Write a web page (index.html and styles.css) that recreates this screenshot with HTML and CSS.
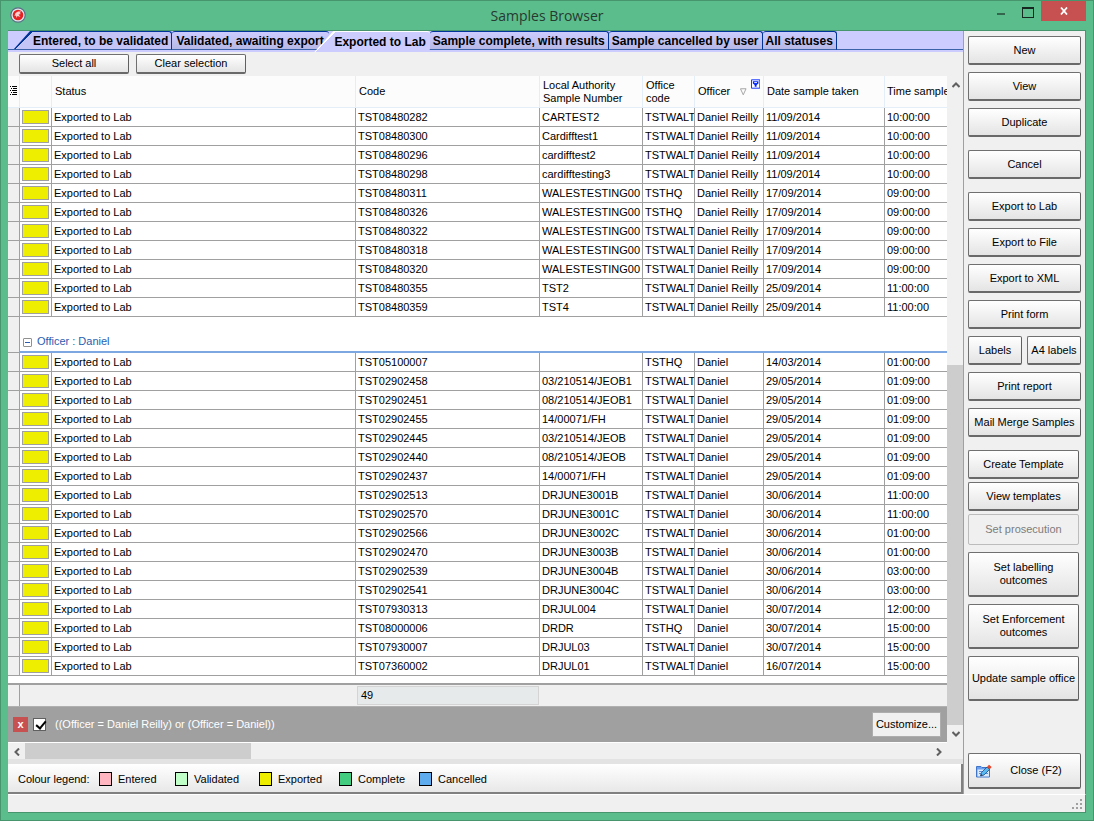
FILE: index.html
```
<!DOCTYPE html>
<html lang="en">
<head>
    <meta charset="UTF-8">
    <meta name="viewport" content="width=device-width, initial-scale=1.0">
    <title>Samples Browser</title>
    <link rel="stylesheet" href="styles.css">
</head>
<body>
    <div class="window">
        <header class="titlebar">
            <svg class="app-icon" width="16" height="16" viewBox="0 0 16 16">
                <circle cx="8" cy="8" r="7.2" fill="#dfe8ee" stroke="#5b6f86" stroke-width="1.2"/>
                <circle cx="8" cy="8" r="5.3" fill="#e42222"/>
                <path d="M4.5 9 L5.5 6 L8 4.5 L11.5 4.5 L9.5 6 L11 7 L8.5 7.5 L10.5 10 L7.5 9 L6.5 11 L6 8.5 Z" fill="#fff" opacity=".8"/>
            </svg>
            <h1>Samples Browser</h1>
            <div class="window-buttons">
                <button type="button" class="minimize" aria-label="Minimize"></button>
                <button type="button" class="maximize" aria-label="Maximize"></button>
                <button type="button" class="close" aria-label="Close">
                    <svg width="8" height="8" viewBox="0 0 8 8"><path d="M1 .5 L7 7.5 M7 .5 L1 7.5" stroke="#fff" stroke-width="1.8"/></svg>
                </button>
            </div>
        </header>

        <div class="content">
            <main class="browser">
                <nav class="tabs">
                    <button type="button" class="tab first">Entered, to be validated</button>
                    <button type="button" class="tab cut">Validated, awaiting export</button>
                    <button type="button" class="tab active">Exported to Lab</button>
                    <button type="button" class="tab">Sample complete, with results</button>
                    <button type="button" class="tab">Sample cancelled by user</button>
                    <button type="button" class="tab">All statuses</button>
                </nav>

                <div class="toolbar">
                    <button type="button" class="btn">Select all</button>
                    <button type="button" class="btn">Clear selection</button>
                </div>

                <div class="grid-area">
                    <div class="grid">
                        <table class="samples">
                            <colgroup>
                                <col class="col-indicator">
                                <col class="col-colour">
                                <col class="col-status">
                                <col class="col-code">
                                <col class="col-number">
                                <col class="col-office">
                                <col class="col-officer">
                                <col class="col-date">
                                <col>
                            </colgroup>
                            <thead>
                                <tr>
                                    <th class="menu-cell">
                                        <svg width="7" height="9" viewBox="0 0 7 9"><path d="M0 .5h1M2 .5h5M1 2.5h1M3 2.5h4M0 4.5h1M2 4.5h5M1 6.5h1M3 6.5h4M0 8.5h1M2 8.5h5" stroke="#000"/></svg>
                                    </th>
                                    <th></th>
                                    <th>Status</th>
                                    <th>Code</th>
                                    <th>Local Authority<br>Sample Number</th>
                                    <th>Office<br>code</th>
                                    <th>
                                        <div class="officer-head">
                                            <span>Officer</span>
                                            <svg class="sort" width="7" height="8" viewBox="0 0 7 8"><path d="M.5 .5 H6.5 L3.5 7 Z" fill="none" stroke="#a0a0a0"/></svg>
                                            <svg class="filter" width="10" height="10" viewBox="0 0 10 10"><path d="M.5 .5h9v9h-9z" fill="#fff" stroke="#0026ff"/><path d="M2 2h6v2.500l-2 1.500v2h-2v-2l-2-1.500z" fill="#0026ff"/><path d="M3.500 3.500h3" stroke="#fff"/></svg>
                                        </div>
                                    </th>
                                    <th>Date sample taken</th>
                                    <th class="time-head">Time sample</th>
                                </tr>
                            </thead>
                            <tbody id="reilly-rows"></tbody>
                            <tbody>
                                <tr class="group-row">
                                    <td class="indicator"></td>
                                    <td colspan="8">
                                        <button type="button" class="collapse" aria-label="Collapse group"></button>Officer : Daniel
                                    </td>
                                </tr>
                            </tbody>
                            <tbody id="daniel-rows"></tbody>
                        </table>

                        <div class="summary">
                            <span class="summary-gutter"></span>
                            <output class="count">49</output>
                        </div>

                        <div class="filter-bar">
                            <button type="button" class="clear-filter" aria-label="Clear filter">x</button>
                            <input type="checkbox" id="filter-on" checked>
                            <label for="filter-on">((Officer = Daniel Reilly) or (Officer = Daniel))</label>
                            <button type="button" class="customize">Customize...</button>
                        </div>
                    </div>

                    <div class="scroll-v">
                        <button type="button" class="arrow" aria-label="Scroll up"><svg width="8" height="6" viewBox="0 0 8 6"><path d="M.5 5 L4 1.5 L7.5 5" fill="none" stroke="#606060" stroke-width="2"/></svg></button>
                        <div class="track"><div class="thumb"></div></div>
                        <button type="button" class="arrow" aria-label="Scroll down"><svg width="8" height="6" viewBox="0 0 8 6"><path d="M.5 1 L4 4.5 L7.5 1" fill="none" stroke="#606060" stroke-width="2"/></svg></button>
                    </div>
                </div>

                <div class="scroll-h">
                    <button type="button" class="arrow" aria-label="Scroll left"><svg width="6" height="8" viewBox="0 0 6 8"><path d="M5 .5 L1.5 4 L5 7.5" fill="none" stroke="#606060" stroke-width="2"/></svg></button>
                    <div class="track"><div class="thumb"></div></div>
                    <button type="button" class="arrow" aria-label="Scroll right"><svg width="6" height="8" viewBox="0 0 6 8"><path d="M1 .5 L4.5 4 L1 7.5" fill="none" stroke="#606060" stroke-width="2"/></svg></button>
                </div>

                <div class="legend">
                    <span class="legend-title">Colour legend:</span>
                    <span class="key"><i class="swatch entered"></i>Entered</span>
                    <span class="key"><i class="swatch validated"></i>Validated</span>
                    <span class="key"><i class="swatch exported"></i>Exported</span>
                    <span class="key"><i class="swatch complete"></i>Complete</span>
                    <span class="key"><i class="swatch cancelled"></i>Cancelled</span>
                </div>
            </main>

            <aside class="actions">
                <div class="group">
                    <button type="button" class="btn">New</button>
                    <button type="button" class="btn">View</button>
                    <button type="button" class="btn">Duplicate</button>
                </div>
                <div class="group">
                    <button type="button" class="btn">Cancel</button>
                </div>
                <div class="group">
                    <button type="button" class="btn">Export to Lab</button>
                    <button type="button" class="btn">Export to File</button>
                    <button type="button" class="btn">Export to XML</button>
                    <button type="button" class="btn">Print form</button>
                    <div class="pair">
                        <button type="button" class="btn">Labels</button>
                        <button type="button" class="btn">A4 labels</button>
                    </div>
                    <button type="button" class="btn">Print report</button>
                    <button type="button" class="btn">Mail Merge Samples</button>
                </div>
                <div class="group tight">
                    <button type="button" class="btn">Create Template</button>
                    <button type="button" class="btn">View templates</button>
                    <button type="button" class="btn" disabled>Set prosecution</button>
                </div>
                <div class="group tall">
                    <button type="button" class="btn">Set labelling<br>outcomes</button>
                    <button type="button" class="btn">Set Enforcement<br>outcomes</button>
                    <button type="button" class="btn">Update sample office</button>
                </div>
                <button type="button" class="btn close-form">
                    <svg width="16" height="14" viewBox="0 0 16 14">
                        <path d="M.5 2.500h4.500l1 1h7.500v9.500h-13z" fill="#6aa0ee" stroke="#3f74c8"/>
                        <path d="M1.500 5.500h11.500v7h-11.500z" fill="#d8e9fb"/>
                        <path d="M3 7.500h4M3 9.500h2M9 9.500h3M9 7.500h3" stroke="#5b8fe0"/>
                        <path d="M4.500 12 L5.500 8.500 L11 3 L13.500 5.500 L8 11 Z" fill="#58b8f0" stroke="#234a80" stroke-width=".8"/>
                        <path d="M11 3 L13 .8 L15.700 3 L13.500 5.500 Z" fill="#e04a30"/>
                        <path d="M4.500 12 L5 10 L6.500 11.300 Z" fill="#303030"/>
                    </svg>
                    <span>Close (F2)</span>
                </button>
            </aside>
        </div>

        <footer class="statusbar">
            <svg width="10" height="10" viewBox="0 0 10 10"><path d="M8 0h2v2h-2zM4 4h2v2h-2zM8 4h2v2h-2zM0 8h2v2h-2zM4 8h2v2h-2zM8 8h2v2h-2z" fill="#a0a0a0"/></svg>
        </footer>
    </div>

    <script>
        // code, local authority number, office, date, time
        const reilly = [
            ['TST08480282', 'CARTEST2', 'TSTWALT', '11/09/2014', '10:00:00'],
            ['TST08480300', 'Cardifftest1', 'TSTWALT', '11/09/2014', '10:00:00'],
            ['TST08480296', 'cardifftest2', 'TSTWALT', '11/09/2014', '10:00:00'],
            ['TST08480298', 'cardifftesting3', 'TSTWALT', '11/09/2014', '10:00:00'],
            ['TST08480311', 'WALESTESTING00', 'TSTHQ', '17/09/2014', '09:00:00'],
            ['TST08480326', 'WALESTESTING00', 'TSTHQ', '17/09/2014', '09:00:00'],
            ['TST08480322', 'WALESTESTING00', 'TSTWALT', '17/09/2014', '09:00:00'],
            ['TST08480318', 'WALESTESTING00', 'TSTWALT', '17/09/2014', '09:00:00'],
            ['TST08480320', 'WALESTESTING00', 'TSTWALT', '17/09/2014', '09:00:00'],
            ['TST08480355', 'TST2', 'TSTWALT', '25/09/2014', '11:00:00'],
            ['TST08480359', 'TST4', 'TSTWALT', '25/09/2014', '11:00:00']
        ];

        const daniel = [
            ['TST05100007', '', 'TSTHQ', '14/03/2014', '01:00:00'],
            ['TST02902458', '03/210514/JEOB1', 'TSTWALT', '29/05/2014', '01:09:00'],
            ['TST02902451', '08/210514/JEOB1', 'TSTWALT', '29/05/2014', '01:09:00'],
            ['TST02902455', '14/00071/FH', 'TSTWALT', '29/05/2014', '01:09:00'],
            ['TST02902445', '03/210514/JEOB', 'TSTWALT', '29/05/2014', '01:09:00'],
            ['TST02902440', '08/210514/JEOB', 'TSTWALT', '29/05/2014', '01:09:00'],
            ['TST02902437', '14/00071/FH', 'TSTWALT', '29/05/2014', '01:09:00'],
            ['TST02902513', 'DRJUNE3001B', 'TSTWALT', '30/06/2014', '11:00:00'],
            ['TST02902570', 'DRJUNE3001C', 'TSTWALT', '30/06/2014', '11:00:00'],
            ['TST02902566', 'DRJUNE3002C', 'TSTWALT', '30/06/2014', '01:00:00'],
            ['TST02902470', 'DRJUNE3003B', 'TSTWALT', '30/06/2014', '01:00:00'],
            ['TST02902539', 'DRJUNE3004B', 'TSTWALT', '30/06/2014', '03:00:00'],
            ['TST02902541', 'DRJUNE3004C', 'TSTWALT', '30/06/2014', '03:00:00'],
            ['TST07930313', 'DRJUL004', 'TSTWALT', '30/07/2014', '12:00:00'],
            ['TST08000006', 'DRDR', 'TSTHQ', '30/07/2014', '15:00:00'],
            ['TST07930007', 'DRJUL03', 'TSTWALT', '30/07/2014', '15:00:00'],
            ['TST07360002', 'DRJUL01', 'TSTWALT', '16/07/2014', '15:00:00']
        ];

        function fillRows(id, rows, officer) {
            const body = document.getElementById(id);
            rows.forEach(function(row) {
                const tr = body.insertRow();
                tr.insertCell().className = 'indicator';
                const colour = tr.insertCell();
                colour.className = 'colour';
                colour.appendChild(document.createElement('div'));
                ['Exported to Lab', row[0], row[1], row[2], officer, row[3], row[4]].forEach(function(text) {
                    tr.insertCell().textContent = text;
                });
            });
        }

        fillRows('reilly-rows', reilly, 'Daniel Reilly');
        fillRows('daniel-rows', daniel, 'Daniel');
    </script>
</body>
</html>
```
FILE: styles.css
```
* {
    box-sizing: border-box;
}

body {
    margin: 0;
    font-family: "Liberation Sans", Arial, sans-serif;
    font-size: 11px;
    line-height: 13px;
    color: #000;
}

button {
    font: inherit;
    color: inherit;
    margin: 0;
    padding: 0;
    border: none;
    background: none;
}

.window {
    min-height: 100vh;
    display: flex;
    flex-direction: column;
    background: #5bbd8c;
    border: 1px solid #46956c;
    padding: 0 7px 7px;
}

/* title bar */
.titlebar {
    display: grid;
    grid-template-columns: 1fr auto 1fr;
    height: 29px;
}

.app-icon {
    margin: 6px 2px;
}

.titlebar h1 {
    margin: 0;
    font-family: "Open Sans", sans-serif;
    font-size: 14px;
    font-weight: normal;
    line-height: 29px;
    color: #263a30;
}

.window-buttons {
    display: flex;
    justify-content: flex-end;
    height: 20px;
}

.minimize,
.maximize {
    width: 27px;
    display: flex;
    justify-content: center;
}

.minimize::before {
    content: "";
    width: 8px;
    height: 2px;
    margin-top: 12px;
    background: #34664e;
}

.maximize::before {
    content: "";
    width: 10px;
    height: 8px;
    margin-top: 6px;
    border: 1px solid #16281f;
    border-top-width: 2px;
}

.close {
    width: 45px;
    background: #c75050;
}

/* main area */
.content {
    flex: 1;
    display: flex;
    background: #f0f0f0;
    border-top: 1px solid #46956c;
    border-right: 1px solid #46956c;
}

.browser {
    flex: 1;
    min-width: 0;
    display: flex;
    flex-direction: column;
}

.tabs {
    display: flex;
    height: 21px;
    padding-left: 5px;
    background: linear-gradient(#ccccff 18px, #3a62a8 18px, #3a62a8 19px, #ccccff 19px);
}

.tab {
    height: 19px;
    padding: 2px 3px 0;
    border: 1px solid #003399;
    border-left: none;
    border-radius: 3px 3px 0 0;
    border-bottom-color: #3a62a8;
    background: linear-gradient(#ccccff, #b8b8e6);
    font-size: 12px;
    font-weight: bold;
    white-space: nowrap;
    overflow: hidden;
}

/* slanted left edges */
.tab.first {
    padding-left: 20px;
    background: linear-gradient(135deg, #003399 14px, #c4c4f6 14px);
    clip-path: polygon(17px 0, 100% 0, 100% 100%, 0 100%);
}

.tab.cut {
    width: 157px;
    padding-left: 4px;
    border-right: none;
    text-align: left;
}

.tab.active {
    height: 21px;
    margin-left: -15px;
    padding: 2px 4px 2px 20px;
    border: none;
    border-top: 1px solid #fff;
    background: linear-gradient(135deg, #fff 15px, #ccccff 15px);
    clip-path: polygon(19px 0, 100% 0, 100% 100%, 0 100%);
}

.toolbar {
    display: flex;
    gap: 7px;
    padding: 2px 11px;
}

.toolbar .btn {
    width: 110px;
    height: 20px;
}

.btn {
    border: 1px solid #707070;
    border-right-color: #606060;
    border-bottom: 2px solid #696969;
    border-radius: 2px;
    background: linear-gradient(#fff, #e4e4e4);
    text-align: center;
}

.btn:disabled {
    border: 1px solid #bcbcbc;
    background: #f0f0f0;
    color: #7c7c7c;
}

/* grid */
.grid-area {
    flex: 1;
    display: flex;
}

.grid {
    flex: 1;
    min-width: 0;
    display: flex;
    flex-direction: column;
    background: #fff;
}

.samples {
    width: 100%;
    table-layout: fixed;
    border-collapse: separate;
    border-spacing: 0;
    margin-bottom: auto;
}

.col-indicator { width: 12px; }
.col-colour { width: 32px; }
.col-status { width: 304px; }
.col-code { width: 184px; }
.col-number { width: 103px; }
.col-office { width: 52px; }
.col-officer { width: 69px; }
.col-date { width: 121px; }

.samples th {
    height: 32px;
    padding: 0 3px;
    border-right: 1px solid #e4eef8;
    border-bottom: 1px solid #e4eef8;
    background: #fcfcfc;
    font-weight: normal;
    text-align: left;
    white-space: nowrap;
    overflow: hidden;
}

.samples .menu-cell {
    padding: 0 2px;
}

.samples .time-head {
    padding: 0 0 0 2px;
}

.officer-head {
    display: flex;
    align-items: center;
}

.sort {
    margin-left: 10px;
}

.filter {
    margin: 0 0 16px 4px;
}

.samples td {
    height: 19px;
    padding: 0 2px;
    border-right: 1px solid #a0a0a0;
    border-bottom: 1px solid #a0a0a0;
    white-space: nowrap;
    overflow: hidden;
}

.samples th:last-child,
.samples td:last-child {
    border-right: none;
}

.samples .indicator {
    background: #f0f0f0;
}

.colour div {
    height: 14px;
    width: 27px;
    border: 1px solid #a0a0a0;
    background: #eeee00;
}

.samples .group-row td {
    height: 36px;
    padding-top: 15px;
    color: #2a5db0;
}

.samples .group-row td:last-child {
    border-bottom: 2px solid #7da7e0;
}

.collapse {
    position: relative;
    width: 9px;
    height: 9px;
    margin: 0 5px 0 1px;
    border: 1px solid #909090;
    border-radius: 1px;
    vertical-align: -1px;
}

.collapse::before {
    content: "";
    position: absolute;
    top: 3px;
    left: 1px;
    width: 5px;
    height: 1px;
    background: #2a5db0;
}

.summary {
    display: flex;
    height: 23px;
    border-top: 2px solid #a0a0a0;
    background: #f0f0f0;
}

.summary-gutter {
    width: 12px;
    border-right: 1px solid #a0a0a0;
}

.count {
    width: 182px;
    height: 19px;
    margin: 1px 0 0 337px;
    padding: 2px 3px;
    border: 1px solid #d4d4d4;
    background: #e6eaeb;
}

.filter-bar {
    display: flex;
    align-items: center;
    height: 36px;
    padding: 0 6px 0 5px;
    background: #a0a0a0;
    border-top: 1px solid #b0b0b0;
    color: #fff;
}

.clear-filter {
    width: 15px;
    height: 15px;
    background: #c75050;
    font-weight: bold;
    line-height: 13px;
}

.filter-bar input {
    appearance: none;
    width: 13px;
    height: 13px;
    margin: 0 9px 0 5px;
    border: 1px solid #606060;
    background: #fff;
}

.filter-bar input:checked::before {
    content: "";
    display: block;
    width: 4px;
    height: 8px;
    margin: 0 0 0 4px;
    border: solid #000;
    border-width: 0 2px 2px 0;
    transform: rotate(40deg);
}

.customize {
    width: 69px;
    height: 25px;
    margin-left: auto;
    border: 1px solid #adadad;
    background: #f0f0f0;
    color: #000;
}

/* scroll bars */
.scroll-v {
    display: flex;
    flex-direction: column;
    width: 16px;
}

.scroll-h {
    display: flex;
    height: 17px;
    margin-right: 16px;
    border-top: 1px solid #fff;
}

.arrow {
    flex: none;
    display: flex;
    align-items: center;
    justify-content: center;
    width: 17px;
    height: 17px;
}

.track {
    flex: 1;
    display: flex;
}

.thumb {
    background: #cdcdcd;
}

.scroll-v .thumb {
    width: 16px;
    height: 57%;
    margin-top: auto;
}

.scroll-v .track {
    align-items: flex-end;
}

.scroll-h .thumb {
    width: 25%;
}

/* legend */
.legend {
    display: flex;
    align-items: center;
    height: 35px;
    padding: 0 10px;
    border-top: 5px solid #e3e3e3;
    background: linear-gradient(#fff, #e6e6e6);
    box-shadow: inset -2px -2px #808080;
}

.legend-title {
    width: 81px;
}

.key {
    display: flex;
    align-items: center;
    width: 80px;
}

.key:nth-child(2) {
    width: 76px;
}

.key:nth-child(3) {
    width: 84px;
}

.swatch {
    width: 13px;
    height: 14px;
    margin-right: 6px;
    border: 1px solid #000;
}

.entered { background: #ffb6c1; }
.validated { background: #c1ffc9; }
.exported { background: #eeee00; }
.complete { background: #43cd80; }
.cancelled { background: #5eacee; }

/* action buttons */
.actions {
    display: flex;
    flex-direction: column;
    width: 122px;
    padding: 5px 4px;
    border-left: 1px solid #a0a0a0;
}

.actions .btn {
    width: 100%;
    height: 29px;
}

.group {
    display: flex;
    flex-direction: column;
    gap: 7px;
    margin-bottom: 13px;
}

.pair {
    display: flex;
    gap: 5px;
}

.group.tight {
    gap: 3px;
    margin-bottom: 7px;
    padding-right: 2px;
}

.group.tight .btn:disabled {
    height: 31px;
}

.group.tall {
    padding-right: 2px;
}

.group.tall .btn {
    height: 45px;
}

.actions .close-form {
    display: flex;
    align-items: center;
    height: 36px;
    margin-top: auto;
    padding-left: 7px;
}

.close-form span {
    flex: 1;
}

.statusbar {
    display: flex;
    justify-content: flex-end;
    align-items: flex-end;
    height: 19px;
    padding: 3px;
    border: 1px solid #46956c;
    border-top-color: #fff;
    border-left: none;
    background: #f0f0f0;
}
```
